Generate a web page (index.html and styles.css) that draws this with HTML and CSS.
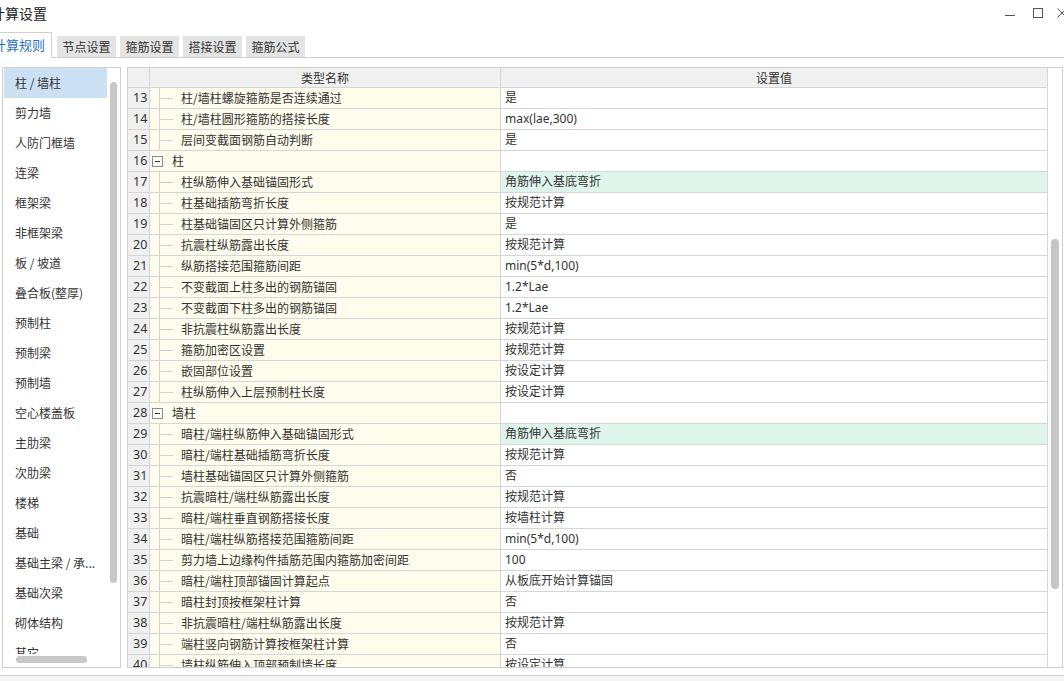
FILE: index.html
```html
<!DOCTYPE html>
<html lang="zh-CN">
<head>
<meta charset="utf-8">
<title>计算设置</title>
<link rel="stylesheet" href="styles.css">
</head>
<body>
<div class="window">
  <header class="titlebar">
    <div class="title">计算设置</div>
    <div class="controls">
      <svg class="ctl ctl-min" width="12" height="12" viewBox="0 0 12 12"><line x1="1" y1="8.5" x2="11" y2="8.5" stroke="#555" stroke-width="1"/></svg>
      <svg class="ctl ctl-max" width="12" height="12" viewBox="0 0 12 12"><rect x="1.5" y="1.5" width="9" height="9" fill="none" stroke="#555" stroke-width="1"/></svg>
      <svg class="ctl ctl-close" width="12" height="12" viewBox="0 0 12 12"><path d="M1.5 1.5 L10.5 10.5 M10.5 1.5 L1.5 10.5" stroke="#555" stroke-width="1" fill="none"/></svg>
    </div>
  </header>

  <nav class="tabs">
    <div class="tab active">计算规则</div>
    <div class="tab">节点设置</div>
    <div class="tab">箍筋设置</div>
    <div class="tab">搭接设置</div>
    <div class="tab">箍筋公式</div>
  </nav>

  <main class="main">
    <aside class="side">
      <div class="list">
        <div class="item sel">柱 / 墙柱</div>
        <div class="item">剪力墙</div>
        <div class="item">人防门框墙</div>
        <div class="item">连梁</div>
        <div class="item">框架梁</div>
        <div class="item">非框架梁</div>
        <div class="item">板 / 坡道</div>
        <div class="item">叠合板(整厚)</div>
        <div class="item">预制柱</div>
        <div class="item">预制梁</div>
        <div class="item">预制墙</div>
        <div class="item">空心楼盖板</div>
        <div class="item">主肋梁</div>
        <div class="item">次肋梁</div>
        <div class="item">楼梯</div>
        <div class="item">基础</div>
        <div class="item">基础主梁 / 承...</div>
        <div class="item">基础次梁</div>
        <div class="item">砌体结构</div>
        <div class="item">其它</div>
      </div>
      <div class="vtrack"><div class="vthumb"></div></div>
      <div class="htrack"><div class="hthumb"></div></div>
    </aside>

    <section class="grid">
      <div class="table">
        <div class="row head">
          <div class="num"></div>
          <div class="hname">类型名称</div>
          <div class="hval">设置值</div>
        </div>
        <div class="row"><div class="num">13</div><div class="name"><span class="br"></span>柱/墙柱螺旋箍筋是否连续通过</div><div class="val">是</div></div>
        <div class="row"><div class="num">14</div><div class="name"><span class="br"></span>柱/墙柱圆形箍筋的搭接长度</div><div class="val">max(lae,300)</div></div>
        <div class="row"><div class="num">15</div><div class="name"><span class="br"></span>层间变截面钢筋自动判断</div><div class="val">是</div></div>
        <div class="row"><div class="num">16</div><div class="name"><span class="tog"></span>柱</div><div class="val"></div></div>
        <div class="row"><div class="num">17</div><div class="name"><span class="br"></span>柱纵筋伸入基础锚固形式</div><div class="val hl">角筋伸入基底弯折</div></div>
        <div class="row"><div class="num">18</div><div class="name"><span class="br"></span>柱基础插筋弯折长度</div><div class="val">按规范计算</div></div>
        <div class="row"><div class="num">19</div><div class="name"><span class="br"></span>柱基础锚固区只计算外侧箍筋</div><div class="val">是</div></div>
        <div class="row"><div class="num">20</div><div class="name"><span class="br"></span>抗震柱纵筋露出长度</div><div class="val">按规范计算</div></div>
        <div class="row"><div class="num">21</div><div class="name"><span class="br"></span>纵筋搭接范围箍筋间距</div><div class="val">min(5*d,100)</div></div>
        <div class="row"><div class="num">22</div><div class="name"><span class="br"></span>不变截面上柱多出的钢筋锚固</div><div class="val">1.2*Lae</div></div>
        <div class="row"><div class="num">23</div><div class="name"><span class="br"></span>不变截面下柱多出的钢筋锚固</div><div class="val">1.2*Lae</div></div>
        <div class="row"><div class="num">24</div><div class="name"><span class="br"></span>非抗震柱纵筋露出长度</div><div class="val">按规范计算</div></div>
        <div class="row"><div class="num">25</div><div class="name"><span class="br"></span>箍筋加密区设置</div><div class="val">按规范计算</div></div>
        <div class="row"><div class="num">26</div><div class="name"><span class="br"></span>嵌固部位设置</div><div class="val">按设定计算</div></div>
        <div class="row"><div class="num">27</div><div class="name"><span class="br"></span>柱纵筋伸入上层预制柱长度</div><div class="val">按设定计算</div></div>
        <div class="row"><div class="num">28</div><div class="name"><span class="tog"></span>墙柱</div><div class="val"></div></div>
        <div class="row"><div class="num">29</div><div class="name"><span class="br"></span>暗柱/端柱纵筋伸入基础锚固形式</div><div class="val hl">角筋伸入基底弯折</div></div>
        <div class="row"><div class="num">30</div><div class="name"><span class="br"></span>暗柱/端柱基础插筋弯折长度</div><div class="val">按规范计算</div></div>
        <div class="row"><div class="num">31</div><div class="name"><span class="br"></span>墙柱基础锚固区只计算外侧箍筋</div><div class="val">否</div></div>
        <div class="row"><div class="num">32</div><div class="name"><span class="br"></span>抗震暗柱/端柱纵筋露出长度</div><div class="val">按规范计算</div></div>
        <div class="row"><div class="num">33</div><div class="name"><span class="br"></span>暗柱/端柱垂直钢筋搭接长度</div><div class="val">按墙柱计算</div></div>
        <div class="row"><div class="num">34</div><div class="name"><span class="br"></span>暗柱/端柱纵筋搭接范围箍筋间距</div><div class="val">min(5*d,100)</div></div>
        <div class="row"><div class="num">35</div><div class="name"><span class="br"></span>剪力墙上边缘构件插筋范围内箍筋加密间距</div><div class="val">100</div></div>
        <div class="row"><div class="num">36</div><div class="name"><span class="br"></span>暗柱/端柱顶部锚固计算起点</div><div class="val">从板底开始计算锚固</div></div>
        <div class="row"><div class="num">37</div><div class="name"><span class="br"></span>暗柱封顶按框架柱计算</div><div class="val">否</div></div>
        <div class="row"><div class="num">38</div><div class="name"><span class="br"></span>非抗震暗柱/端柱纵筋露出长度</div><div class="val">按规范计算</div></div>
        <div class="row"><div class="num">39</div><div class="name"><span class="br"></span>端柱竖向钢筋计算按框架柱计算</div><div class="val">否</div></div>
        <div class="row"><div class="num">40</div><div class="name"><span class="br"></span>墙柱纵筋伸入顶部预制墙长度</div><div class="val">按设定计算</div></div>
      </div>
      <div class="gtrack"><div class="gthumb"></div></div>
    </section>
  </main>

  <footer class="footer"></footer>
</div>
</body>
</html>
```

FILE: styles.css
```css
* { box-sizing: border-box; }

html, body {
  margin: 0;
  padding: 0;
  overflow: hidden;
}

body {
  width: 1064px;
  height: 681px;
  background: #ffffff;
  font-family: "Noto Sans", "Noto Sans CJK SC", sans-serif;
  font-size: 12px;
  color: #333333;
}

.window {
  width: 1064px;
  height: 681px;
  display: flex;
  flex-direction: column;
}

/* title bar */
.titlebar {
  height: 26px;
  flex: none;
  display: flex;
  align-items: center;
}

.title {
  margin-left: -9px;
  font-family: "Noto Sans CJK SC", sans-serif;
  font-size: 14px;
  line-height: 26px;
  color: #222222;
}

.controls {
  margin-left: auto;
  margin-right: -4px;
  display: flex;
  align-items: center;
}

.ctl { display: block; }
.ctl-max { margin-left: 16px; }
.ctl-close { margin-left: 12px; }

/* tabs */
.tabs {
  height: 32px;
  flex: none;
  margin-left: -14px;
  display: flex;
  align-items: flex-end;
  gap: 4px;
  border-bottom: 1px solid #cfcfcf;
}

.tab {
  width: 59px;
  height: 21px;
  line-height: 21px;
  text-align: center;
  background: #e4e4e4;
  color: #333333;
  font-family: "Noto Sans CJK SC", sans-serif;
  font-size: 12px;
  white-space: nowrap;
}

.tab.active {
  width: auto;
  height: 26px;
  line-height: 24px;
  padding: 0 6px;
  margin-bottom: -1px;
  margin-right: 1px;
  background: #ffffff;
  border: 1px solid #cfcfcf;
  border-bottom: none;
  color: #1f72c8;
  font-size: 13px;
}

/* main area */
.main {
  flex: none;
  height: 601px;
  margin-top: 9px;
  margin-left: 2px;
  display: flex;
  gap: 6px;
}

/* left list */
.side {
  width: 119px;
  height: 601px;
  border: 1px solid #cfcfcf;
  display: grid;
  grid-template-columns: 104px 13px;
  grid-template-rows: 586px 13px;
}

.list {
  padding-left: 1px;
  overflow: hidden;
}

.item {
  height: 30px;
  line-height: 30px;
  padding-left: 11px;
  white-space: nowrap;
  font-family: "Noto Sans CJK SC", sans-serif;
  color: #333333;
}

.item.sel { background: #cce0f4; }

.vthumb {
  margin: 14px 0 0 3px;
  width: 7px;
  height: 501px;
  border-radius: 4px;
  background: #c8c8c8;
}

.htrack { grid-column: 1 / span 2; }

.hthumb {
  margin: 2px 0 0 13px;
  width: 71px;
  height: 7px;
  border-radius: 4px;
  background: #c8c8c8;
}

/* right grid */
.grid {
  width: 936px;
  height: 601px;
  border: 1px solid #cfcfcf;
  display: flex;
}

.table {
  width: 920px;
  flex: none;
  overflow: hidden;
}

.row {
  display: grid;
  grid-template-columns: 22px 351px 547px;
  height: 21px;
}

.row > div {
  border-right: 1px solid #d6d6d6;
  border-bottom: 1px solid #d6d6d6;
  line-height: 20px;
  white-space: nowrap;
  overflow: hidden;
}

.row.head { height: 20px; }

.row.head > div {
  background: #f0f0f0;
  line-height: 19px;
  text-align: center;
  font-family: "Noto Sans CJK SC", sans-serif;
}

.num {
  background: #f0f0f0;
  padding-left: 5px;
  font-size: 12.5px;
}

.name {
  background: #fefcec;
  display: flex;
  align-items: center;
  font-family: "Noto Sans CJK SC", sans-serif;
}

.br {
  flex: none;
  align-self: stretch;
  width: 14px;
  margin-left: 9px;
  margin-right: 8px;
  background:
    linear-gradient(#d2d2d2, #d2d2d2) 0 0 / 1px 100% no-repeat,
    linear-gradient(#d2d2d2, #d2d2d2) 0 50% / 100% 1px no-repeat;
}

.tog {
  flex: none;
  width: 11px;
  height: 11px;
  margin-left: 2px;
  margin-right: 9px;
  border: 1px solid #8c8c8c;
  background: #ffffff;
  display: flex;
  align-items: center;
  justify-content: center;
}

.tog::after {
  content: "";
  width: 5px;
  height: 1px;
  background: #333333;
}

.val {
  padding-left: 4px;
  font-family: "Noto Sans", "Noto Sans CJK SC", sans-serif;
}

.val.hl { background: #dff5ec; }

.gtrack {
  width: 14px;
  flex: none;
}

.gthumb {
  margin: 171px 0 0 3px;
  width: 8px;
  height: 350px;
  border-radius: 4px;
  background: #c6c6c6;
}

/* footer */
.footer {
  flex: 1;
  margin-top: 7px;
  border-top: 1px solid #cfcfcf;
  background: #f4f4f4;
}
```
